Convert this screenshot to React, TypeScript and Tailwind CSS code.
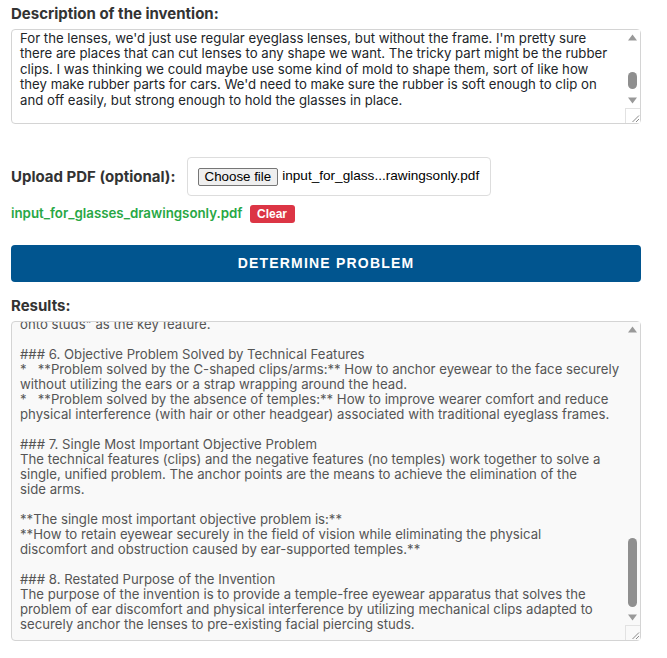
import { useEffect, useRef } from "react";

const descriptionText = [
  "My idea is a pair of glasses that don't have the arms that go over your ears. I've always",
  "hated how normal glasses press on the side of my head and get tangled in my hair, and they",
  "never sit right when I wear a hat or headphones. A lot of people these days have facial",
  "piercings, like the little studs on the bridge of the nose or up by the eyebrows, so why not",
  "use those to hold the glasses? The glasses would have small C-shaped clips on each side",
  "that snap onto the piercing studs, so the lenses just sit in front of your eyes without",
  "anything going back to your ears. You could take them off just by unclipping them.",
  "",
  "For making them, I'm hoping to keep things simple and pretty cheap.",
  "For the lenses, we'd just use regular eyeglass lenses, but without the frame. I'm pretty sure",
  "there are places that can cut lenses to any shape we want. The tricky part might be the rubber",
  "clips. I was thinking we could maybe use some kind of mold to shape them, sort of like how",
  "they make rubber parts for cars. We'd need to make sure the rubber is soft enough to clip on",
  "and off easily, but strong enough to hold the glasses in place.",
  "",
  "The clips themselves could have a thin stainless steel or titanium core bent into a C shape",
  "with the rubber over it, so it grips the stud without scratching it or the skin around it.",
  "I think the whole thing could be pretty light since there's no frame going around the",
  "lenses and no arms. Maybe a small bridge piece between the two lenses to keep them lined",
  "up. I'd like it to come in a few sizes since everyone's piercings are in slightly different",
  "spots on their face.",
].join("\n");

const resultsText = [
  "### 1. Identification of the Technical Field",
  "The invention relates to the field of eyewear, and more particularly to frameless spectacles",
  "that are retained on the face of the wearer without the use of temples (side arms).",
  "",
  "### 2. Closest Prior Art",
  "The closest prior art is considered to be conventional rimless eyeglasses, in which lenses are",
  "connected by a bridge and held on the face by temples resting on the ears. Known alternatives",
  "include pince-nez, which clamp onto the bridge of the nose, and sports eyewear retained by an",
  "elastic strap wrapping around the back of the head.",
  "",
  "### 3. Technical Features of the Invention",
  "*   **Lenses:** Standard prescription or non-prescription eyeglass lenses, cut to shape and",
  "used without a surrounding frame.",
  "*   **Clips/arms:** C-shaped clips formed from a resilient material (e.g. molded rubber,",
  "optionally with a metal core) attached to the lateral edges of the lenses.",
  "*   **Anchor points:** Pre-existing facial piercing studs of the wearer, onto which the clips",
  "are releasably engaged.",
  "*   **Absence of temples:** No side arms extend from the lenses towards the ears.",
  "",
  "### 4. Distinguishing Features over the Closest Prior Art",
  "The invention differs from conventional rimless eyeglasses in that:",
  "1.  The eyewear is held in position by clips engaging facial piercing studs rather than by",
  "temples resting on the ears.",
  "2.  The temples are omitted entirely, so that no part of the eyewear contacts the ears, the",
  "sides of the head or the hair of the wearer.",
  "3.  The clips are resilient, allowing the eyewear to be attached and removed by hand while",
  "remaining securely retained during normal use.",
  "",
  "### 5. Technical Effect of the Distinguishing Features",
  "*   The clips transfer the weight of the lenses to fixed anchor points on the face, so the",
  "lenses are held at a constant distance and angle in front of the eyes.",
  "*   Removing the temples eliminates pressure on the ears and the sides of the head, and",
  "avoids interference with hats, headphones, helmets and long hair.",
  "*   The resilient material of the clips absorbs small movements and prevents damage to the",
  "piercing studs or the surrounding skin.",
  "The description identifies the combination of \"frameless lenses\" and \"resilient clips that snap",
  "onto studs\" as the key feature.",
  "",
  "### 6. Objective Problem Solved by Technical Features",
  "*   **Problem solved by the C-shaped clips/arms:** How to anchor eyewear to the face securely",
  "without utilizing the ears or a strap wrapping around the head.",
  "*   **Problem solved by the absence of temples:** How to improve wearer comfort and reduce",
  "physical interference (with hair or other headgear) associated with traditional eyeglass frames.",
  "",
  "### 7. Single Most Important Objective Problem",
  "The technical features (clips) and the negative features (no temples) work together to solve a",
  "single, unified problem. The anchor points are the means to achieve the elimination of the",
  "side arms.",
  "",
  "**The single most important objective problem is:**",
  "**How to retain eyewear securely in the field of vision while eliminating the physical",
  "discomfort and obstruction caused by ear-supported temples.**",
  "",
  "### 8. Restated Purpose of the Invention",
  "The purpose of the invention is to provide a temple-free eyewear apparatus that solves the",
  "problem of ear discomfort and physical interference by utilizing mechanical clips adapted to",
  "securely anchor the lenses to pre-existing facial piercing studs.",
].join("\n");

function Arrow({ down }: { down?: boolean }) {
  return (
    <svg width="15" height="15" viewBox="0 0 15 15" className="block">
      <polygon
        points={down ? "3,4.5 12,4.5 7.5,10.5" : "3,10.5 12,10.5 7.5,4.5"}
        fill="#999"
      />
    </svg>
  );
}

// classic scrollbar drawn over the textarea's right edge
function ScrollBar({ bg, thumb }: { bg: string; thumb: string }) {
  return (
    <div className={`pointer-events-none absolute top-[1px] right-[1px] bottom-[1px] w-[15px] flex flex-col ${bg}`}>
      <Arrow />
      <div className="relative flex-1">
        <div className={`absolute left-[3px] w-[9px] rounded-full bg-[#8f8f8f] ${thumb}`} />
      </div>
      <Arrow down />
      <div className="h-[15px] border-t border-l border-[#e2e2e2]">
        <svg width="14" height="14" viewBox="0 0 14 14" className="block">
          <path d="M13 6.5 L6.5 13 M13 10 L10 13" stroke="#8a8a8a" strokeWidth="1" />
        </svg>
      </div>
    </div>
  );
}

export default function App() {
  const descRef = useRef<HTMLTextAreaElement>(null);
  const resultsRef = useRef<HTMLTextAreaElement>(null);

  useEffect(() => {
    if (descRef.current) descRef.current.scrollTop = 147;
    if (resultsRef.current) resultsRef.current.scrollTop = resultsRef.current.scrollHeight;
  }, []);

  return (
    <div className="min-h-screen bg-white pt-[5px] pl-[11px] font-['Inter',sans-serif]">
      <div className="w-[630px]">
        <label className="block text-[15px] leading-[18px] font-bold text-[#333] mb-[6px]">
          Description of the invention:
        </label>
        <div className="relative">
          <textarea
            ref={descRef}
            readOnly
            wrap="off"
            defaultValue={descriptionText}
            className="block w-full h-[95px] pl-2 pr-[23px] py-2 text-[13.2px] leading-[15.5px] text-[#212529] bg-white border border-[#d4d4d4] rounded-[4px] font-['Inter',sans-serif] outline-none resize-none overflow-hidden [scrollbar-width:none]"
          />
          <ScrollBar bg="bg-white" thumb="top-[27px] h-[17px]" />
        </div>

        {/* PDF upload */}
        <div className="mt-[33px] flex items-center gap-[11px]">
          <span className="text-[15px] leading-[18px] font-bold text-[#333] pt-[1px]">Upload PDF (optional):</span>
          <div className="h-[39px] w-[304px] flex items-center gap-[4px] px-[10px] border border-[#ddd] rounded-[4px] bg-white font-['Liberation_Sans',Arial,sans-serif] text-[13.33px] text-black">
            <span className="h-[18px] px-[6px] flex items-center bg-[#efefef] border border-[#767676] rounded-[2px]">
              Choose file
            </span>
            <span className="text-[13.6px]">input_for_glass...rawingsonly.pdf</span>
          </div>
        </div>

        <div className="mt-[9px] h-[18px] flex items-center gap-[7px]">
          <span className="text-[13.3px] font-semibold text-[#28a745]">input_for_glasses_drawingsonly.pdf</span>
          <button className="h-[18px] w-[45px] rounded-[3px] bg-[#dc3545] text-white text-[12px] font-bold font-['Liberation_Sans',Arial,sans-serif]">
            Clear
          </button>
        </div>

        <button className="mt-[22px] w-full h-[37px] rounded-[4px] bg-[#01558f] text-white text-[14px] font-bold tracking-[1.2px] font-['Liberation_Sans',Arial,sans-serif]">
          DETERMINE PROBLEM
        </button>

        <label className="block mt-[15px] mb-[6px] text-[15px] leading-[18px] font-bold text-[#333]">
          Results:
        </label>
        <div className="relative">
          <textarea
            ref={resultsRef}
            readOnly
            wrap="off"
            defaultValue={resultsText}
            className="block w-full h-[320px] pl-2 pr-[23px] py-2 text-[13.2px] leading-[15px] text-[#555] bg-[#f9f9f9] border border-[#d4d4d4] rounded-[4px] font-['Inter',sans-serif] outline-none resize-none overflow-hidden [scrollbar-width:none]"
          />
          <ScrollBar bg="bg-[#f9f9f9]" thumb="top-[201px] h-[69px]" />
        </div>
      </div>
    </div>
  );
}
